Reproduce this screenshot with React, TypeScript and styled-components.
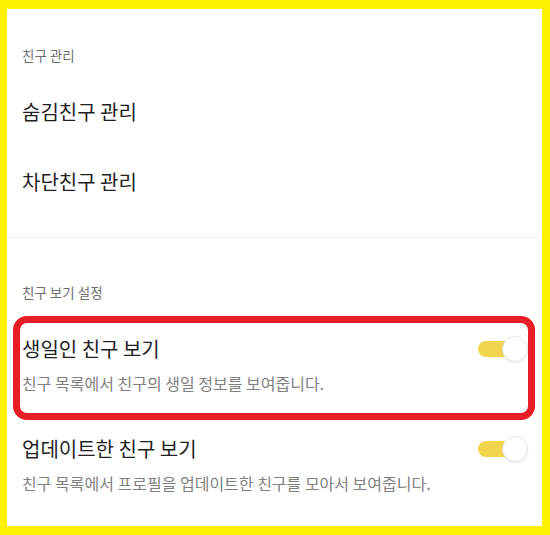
import React from "react";
import styled, { createGlobalStyle } from "styled-components";

const GlobalStyle = createGlobalStyle`
  html, body {
    margin: 0;
    padding: 0;
    background: #ffffff;
  }
  body {
    font-family: "Noto Sans CJK KR", "Noto Sans", sans-serif;
  }
`;

const Frame = styled.div`
  box-sizing: border-box;
  width: 550px;
  height: 535px;
  border-style: solid;
  border-color: #fff200;
  border-width: 9px 8px 9px 7px;
  background: #ffffff;
  overflow: hidden;
`;

const Section = styled.section<{ $top: number; $bottom?: number }>`
  padding-top: ${(p) => p.$top}px;
  padding-bottom: ${(p) => p.$bottom ?? 0}px;
`;

const SectionLabel = styled.div`
  padding: 0 15px;
  margin-bottom: 11px;
  height: 20px;
  line-height: 20px;
  font-size: 13.5px;
  color: #6f6f6f;
`;

const MenuItem = styled.div`
  display: flex;
  align-items: center;
  height: 70px;
  padding: 0 15px;
  font-size: 20px;
  color: #1f1f1f;
`;

const Divider = styled.div`
  height: 1px;
  background: #f1f1f1;
  margin-right: 2px;
`;

const SettingRow = styled.div<{ $highlight?: boolean }>`
  position: relative;
  padding: 23px 14px 20px 15px;

  ${(p) =>
    p.$highlight &&
    `
    &::after {
      content: "";
      position: absolute;
      top: 3px;
      bottom: -7px;
      left: 6px;
      right: 7px;
      border: 7px solid #e81d25;
      border-radius: 14px;
      pointer-events: none;
      z-index: 2;
    }
  `}
`;

const RowHead = styled.div`
  display: flex;
  align-items: center;
  justify-content: space-between;
  height: 26px;
`;

const RowTitle = styled.div`
  font-size: 20px;
  line-height: 26px;
  color: #1f1f1f;
`;

const RowDesc = styled.div`
  margin-top: 11px;
  font-size: 16px;
  line-height: 20px;
  color: #808080;
`;

const ToggleWrap = styled.div`
  position: relative;
  width: 50px;
  height: 26px;
  margin-top: -1px;
`;

const Track = styled.div<{ $on: boolean }>`
  position: absolute;
  left: 0;
  top: 5px;
  width: 38px;
  height: 16px;
  border-radius: 8px;
  background: ${(p) => (p.$on ? "#f2d54d" : "#d9d9d9")};
`;

const Knob = styled.div<{ $on: boolean }>`
  position: absolute;
  top: 0;
  ${(p) => (p.$on ? "right: 0;" : "left: 0;")}
  box-sizing: border-box;
  width: 26px;
  height: 26px;
  border-radius: 50%;
  background: #ffffff;
  border: 1px solid #e6e6e6;
  box-shadow: 0 1px 2px rgba(0, 0, 0, 0.08);
`;

const Toggle: React.FC<{ on: boolean }> = ({ on }) => (
  <ToggleWrap>
    <Track $on={on} />
    <Knob $on={on} />
  </ToggleWrap>
);

const settings = [
  {
    title: "생일인 친구 보기",
    desc: "친구 목록에서 친구의 생일 정보를 보여줍니다.",
    highlight: true,
  },
  {
    title: "업데이트한 친구 보기",
    desc: "친구 목록에서 프로필을 업데이트한 친구를 모아서 보여줍니다.",
    highlight: false,
  },
];

export default function App() {
  return (
    <>
      <GlobalStyle />
      <Frame>
        <Section $top={36} $bottom={21}>
          <SectionLabel>친구 관리</SectionLabel>
          <MenuItem>숨김친구 관리</MenuItem>
          <MenuItem>차단친구 관리</MenuItem>
        </Section>
        <Divider />
        <Section $top={44}>
          <SectionLabel>친구 보기 설정</SectionLabel>
          {settings.map((s) => (
            <SettingRow key={s.title} $highlight={s.highlight}>
              <RowHead>
                <RowTitle>{s.title}</RowTitle>
                <Toggle on />
              </RowHead>
              <RowDesc>{s.desc}</RowDesc>
            </SettingRow>
          ))}
        </Section>
      </Frame>
    </>
  );
}
